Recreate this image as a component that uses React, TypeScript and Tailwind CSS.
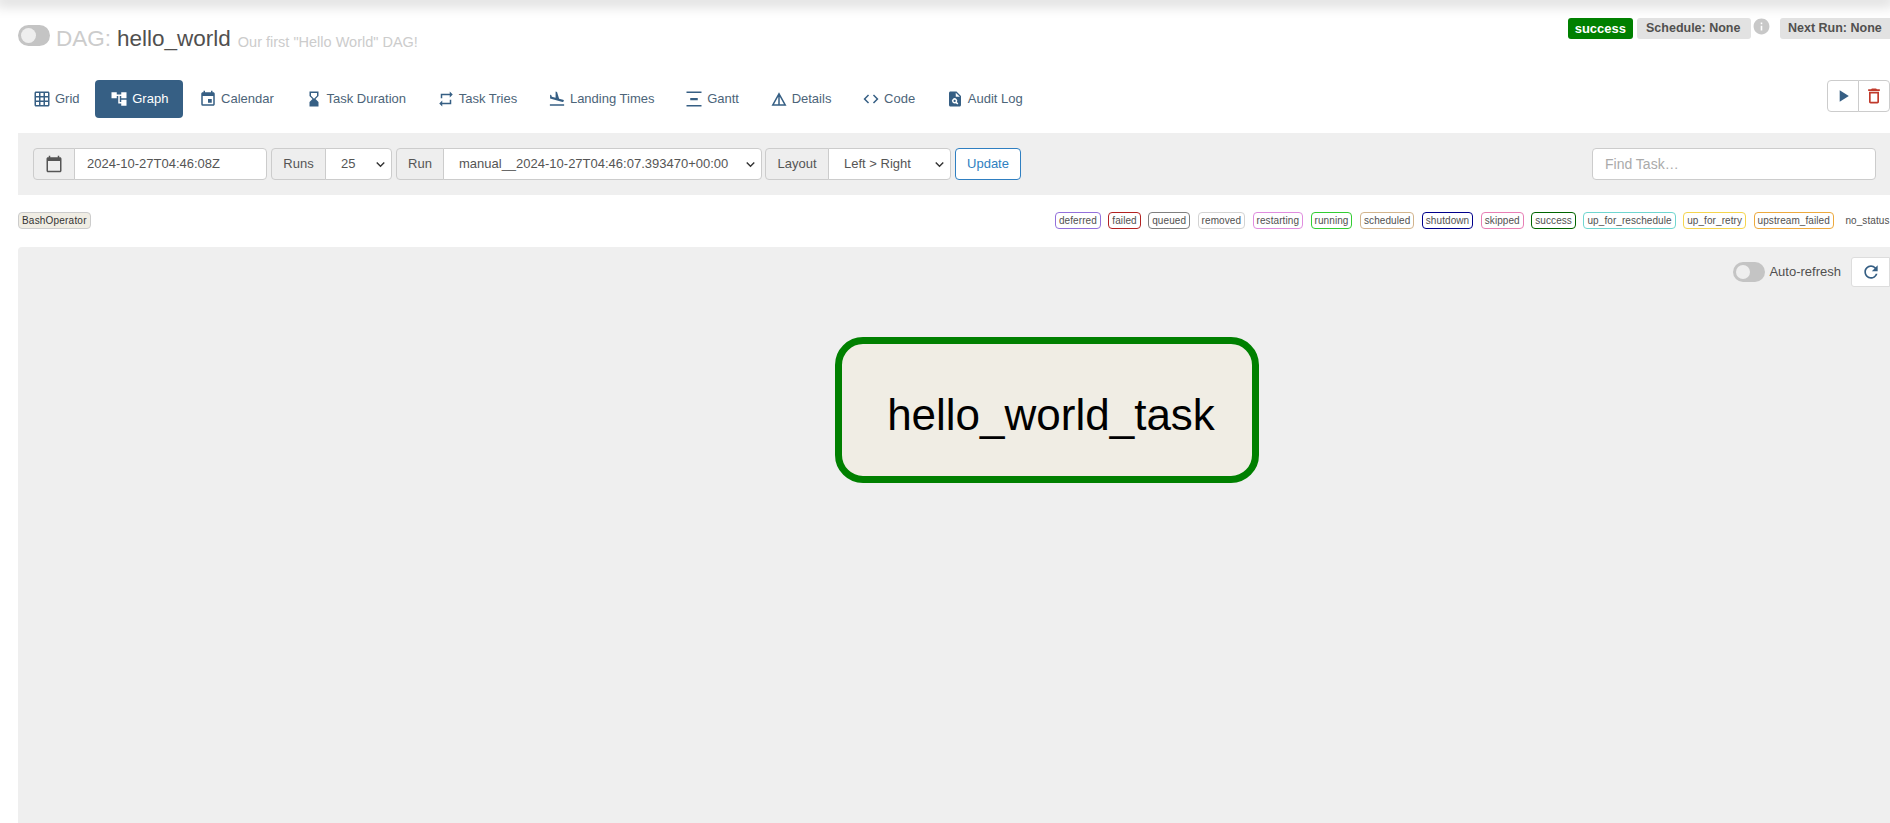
import React from "react";
import {
  MdGridOn, MdAccountTree, MdEvent, MdHourglassBottom, MdRepeat, MdFlightLand,
  MdVerticalDistribute, MdDetails, MdCode, MdPlagiarism, MdPlayArrow, MdDeleteOutline,
  MdRefresh, MdInfo, MdCalendarToday, MdKeyboardArrowDown,
} from "react-icons/md";

const tabs = [
  { label: "Grid", Icon: MdGridOn },
  { label: "Graph", Icon: MdAccountTree, active: true },
  { label: "Calendar", Icon: MdEvent },
  { label: "Task Duration", Icon: MdHourglassBottom },
  { label: "Task Tries", Icon: MdRepeat },
  { label: "Landing Times", Icon: MdFlightLand },
  { label: "Gantt", Icon: MdVerticalDistribute },
  { label: "Details", Icon: MdDetails },
  { label: "Code", Icon: MdCode },
  { label: "Audit Log", Icon: MdPlagiarism },
];

const states = [
  { label: "deferred", cls: "border-[#9370db]" },
  { label: "failed", cls: "border-[#b22222]" },
  { label: "queued", cls: "border-[#808080]" },
  { label: "removed", cls: "border-[#d3d3d3]" },
  { label: "restarting", cls: "border-[#e08ddf]" },
  { label: "running", cls: "border-[#32cd32]" },
  { label: "scheduled", cls: "border-[#d2b48c]" },
  { label: "shutdown", cls: "border-[#00008b]" },
  { label: "skipped", cls: "border-[#e87fb5]" },
  { label: "success", cls: "border-[#006400]" },
  { label: "up_for_reschedule", cls: "border-[#6fd6d0]" },
  { label: "up_for_retry", cls: "border-[#f5d54e]" },
  { label: "upstream_failed", cls: "border-[#eda93d]" },
  { label: "no_status", cls: "border-transparent" },
];

function Addon({ children, w }: { children: React.ReactNode; w: string }) {
  return (
    <div className={`flex h-full items-center justify-center rounded-l-[4px] border border-[#ccc] bg-[#eee] text-[#555] ${w}`}>
      {children}
    </div>
  );
}

function Select({ children, w }: { children: React.ReactNode; w: string }) {
  return (
    <div className={`-ml-px flex h-full items-center justify-between rounded-r-[4px] border border-[#ccc] bg-white pl-[15px] pr-[2px] text-[#555] ${w}`}>
      <span className="whitespace-nowrap">{children}</span>
      <MdKeyboardArrowDown className="text-[17px] text-[#333]" />
    </div>
  );
}

function Toggle({ w, h }: { w: string; h: string }) {
  return (
    <div className={`flex items-center rounded-full bg-[#c4c4c4] p-[3px] ${w} ${h}`}>
      <div className="aspect-square h-full rounded-full bg-[#eee]" />
    </div>
  );
}

export default function App() {
  return (
    <div className="h-[823px] w-[1890px] overflow-hidden bg-white font-['Liberation_Sans',Arial,sans-serif] text-[13px]">
      <div className="h-0 w-full shadow-[0_0_14px_5px_rgba(0,0,0,0.18)]" />
      <div className="pl-[18px]">
        <div className="flex h-[80px] justify-between">
          <div className="flex items-start pt-[25px]">
            <Toggle w="w-[32px]" h="h-[21px]" />
            <span className="ml-[6px] text-[22.5px] leading-[28px] text-[#ccc]">DAG:</span>
            <span className="ml-[6px] text-[22.5px] leading-[28px] text-[#51504f]">hello_world</span>
            <span className="ml-[7px] mt-[9px] text-[14.5px] leading-[16px] text-[#ccc]">Our first "Hello World" DAG!</span>
          </div>
          <div className="flex items-start pt-[18px] text-[12.5px] font-bold leading-[21px]">
            <span className="rounded-[3px] bg-[#008000] px-[7px] text-[13px] text-white">success</span>
            <span className="ml-[4px] w-[114px] rounded-[3px] bg-[#e2e2e2] pl-[9px] text-[#51504f]">Schedule: None</span>
            <span className="ml-[1px] -mt-px"><MdInfo className="text-[19px] text-[#c8c8c8]" /></span>
            <span className="ml-[9px] w-[110px] whitespace-nowrap rounded-l-[3px] bg-[#e2e2e2] pl-[8px] text-[#51504f]">Next Run: None</span>
          </div>
        </div>

        <div className="flex h-[38px] items-start justify-between">
          <nav className="flex gap-[0.7px]">
            {tabs.map(({ label, Icon, active }) => (
              <div
                key={label}
                className={`flex h-[38px] items-center whitespace-nowrap rounded-[4px] px-[15px] ${active ? "bg-[#365f84] text-white" : "text-[#4c6479]"}`}
              >
                <Icon className={`mr-[4px] text-[18px] ${active ? "text-white" : "text-[#365f84]"}`} />
                {label}
              </div>
            ))}
          </nav>
          <div className="flex h-[32px]">
            <div className="flex w-[32px] items-center justify-center rounded-l-[4px] border border-[#ccc] bg-white">
              <MdPlayArrow className="text-[20px] text-[#365f84]" />
            </div>
            <div className="-ml-px flex w-[32px] items-center justify-center rounded-r-[4px] border border-[#ccc] bg-white">
              <MdDeleteOutline className="text-[20px] text-[#c0392b]" />
            </div>
          </div>
        </div>

        <div className="mt-[15px] flex h-[62px] items-center justify-between bg-[#efefef] pl-[15px] pr-[14px]">
          <div className="flex h-[32px] items-center">
            <Addon w="w-[42px]"><MdCalendarToday className="text-[18px] text-[#555]" /></Addon>
            <div className="-ml-px flex h-full w-[193px] items-center rounded-r-[4px] border border-[#ccc] bg-white pl-[12px] text-[#555]">2024-10-27T04:46:08Z</div>
            <div className="ml-[4px] flex h-full items-center">
              <Addon w="w-[55px]">Runs</Addon>
              <Select w="w-[67px]">25</Select>
            </div>
            <div className="ml-[4px] flex h-full items-center">
              <Addon w="w-[48px]">Run</Addon>
              <Select w="w-[319px]">manual__2024-10-27T04:46:07.393470+00:00</Select>
            </div>
            <div className="ml-[3px] flex h-full items-center">
              <Addon w="w-[64px]">Layout</Addon>
              <Select w="w-[123px]">Left &gt; Right</Select>
            </div>
            <button className="ml-[4px] h-full w-[66px] rounded-[4px] border border-[#2f7fc1] bg-white text-[#2f7fc1]">Update</button>
          </div>
          <div className="flex h-[32px] w-[284px] items-center rounded-[4px] border border-[#ccc] bg-white pl-[12px] text-[14px] text-[#aaa]">Find Task…</div>
        </div>

        <div className="flex h-[52px] items-center justify-between pb-[1px] text-[10px] tracking-[0.2px]">
          <span className="rounded-[4px] border border-[#ccc] bg-[#f0ede4] px-[3px] leading-[15px] text-[#333]">BashOperator</span>
          <div className="-mr-[3.5px] flex gap-[7.5px] tracking-[0.08px]">
            {states.map((s) => (
              <span key={s.label} className={`rounded-[4px] border bg-white px-[3px] leading-[15px] text-[#51504f] ${s.cls}`}>{s.label}</span>
            ))}
          </div>
        </div>

        <div className="h-[576px] rounded-tl-[4px] bg-[#efefef]">
          <div className="flex h-[50px] items-center justify-end">
            <Toggle w="w-[32px]" h="h-[20px]" />
            <span className="ml-[4px] mr-[10px] text-[13px] text-[#51504f]">Auto-refresh</span>
            <div className="flex h-[30px] w-[39px] items-center justify-center rounded-l-[3px] border border-[#ddd] bg-white">
              <MdRefresh className="text-[20px] text-[#365f84]" />
            </div>
          </div>
          <div className="ml-[817px] mt-[40px] flex h-[146px] w-[424px] items-center justify-center rounded-[28px] border-[7px] border-[#008000] bg-[#f0ede4] pl-[8px] pt-[10px] text-[44px] text-black">
            hello_world_task
          </div>
        </div>
      </div>
    </div>
  );
}
